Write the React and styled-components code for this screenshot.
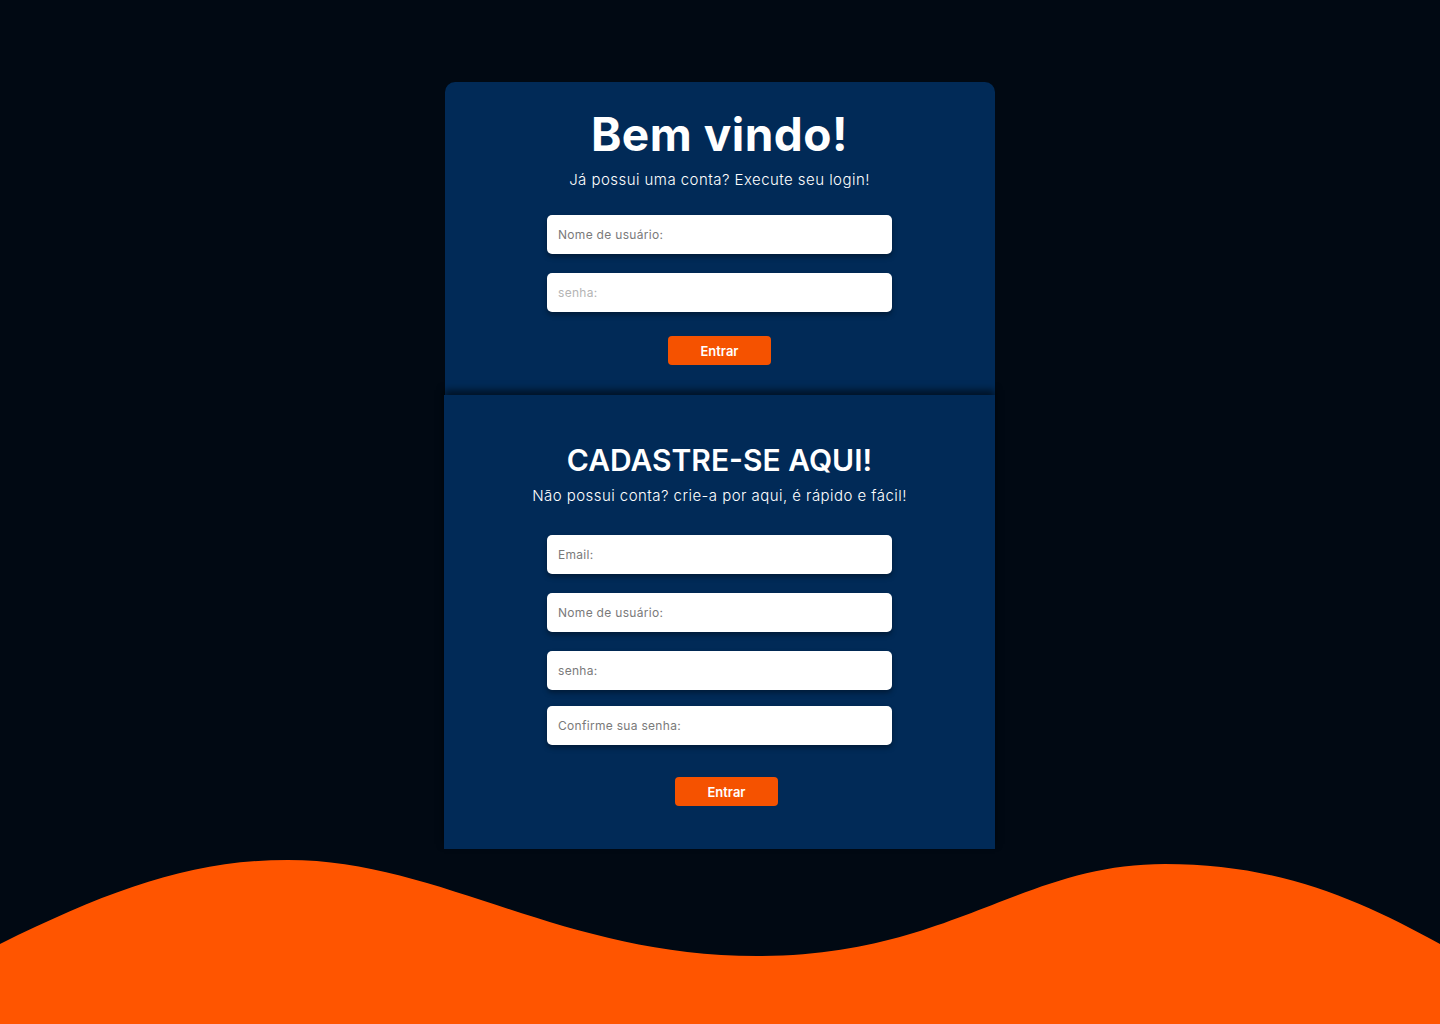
import React from "react";
import styled, { createGlobalStyle } from "styled-components";

const GlobalStyle = createGlobalStyle`
  * { box-sizing: border-box; }
  body {
    margin: 0;
    background: #010913;
    font-family: "Inter", "Noto Sans", sans-serif;
  }
`;

export default function App() {
  return (
    <>
      <GlobalStyle />
      <Page>
        <Stack>
          <LoginCard>
            <Title>Bem vindo!</Title>
            <Subtitle $top="8px">Já possui uma conta? Execute seu login!</Subtitle>
            <Form $top="25px">
              <Field placeholder="Nome de usuário:" />
              <Field placeholder="senha:" type="password" $faint />
            </Form>
            <Button $top="24px">Entrar</Button>
          </LoginCard>
          <RegisterCard>
            <SectionTitle>CADASTRE-SE AQUI!</SectionTitle>
            <Subtitle $top="8px">
              Não possui conta? crie-a por aqui, é rápido e fácil!
            </Subtitle>
            <Form $top="29px">
              <Field placeholder="Email:" />
              <Field placeholder="Nome de usuário:" />
              <Field placeholder="senha:" type="password" />
              <Field placeholder="Confirme sua senha:" type="password" $tight />
            </Form>
            <Button $top="32px" $shift="14px">
              Entrar
            </Button>
          </RegisterCard>
        </Stack>
        <Wave viewBox="0 0 1440 174" preserveAspectRatio="none">
          <path
            d="M0 94 C 110 40 190 10 288 10 C 440 10 560 106 757 106 C 950 106 1020 14 1165 14 C 1280 14 1360 50 1440 94 L 1440 174 L 0 174 Z"
            fill="#ff5500"
          />
        </Wave>
      </Page>
    </>
  );
}

const Page = styled.div`
  min-height: 1024px;
  display: flex;
  flex-direction: column;
  align-items: center;
`;

const Stack = styled.div`
  margin-top: 82px;
  width: 550px;
  display: flex;
  flex-direction: column;
`;

const LoginCard = styled.section`
  background: #012a57;
  border-radius: 10px 10px 0 0;
  padding: 24px 1px 30px 0;
  display: flex;
  flex-direction: column;
  align-items: center;
`;

const RegisterCard = styled.section`
  position: relative;
  background: #012a57;
  margin-left: -1px;
  padding: 47px 0 43px;
  display: flex;
  flex-direction: column;
  align-items: center;
  box-shadow: 0 -5px 7px rgba(0, 0, 0, 0.55);
`;

const Title = styled.h1`
  margin: 0;
  color: #ffffff;
  font-size: 46px;
  font-weight: 700;
  line-height: 56px;
  letter-spacing: 0.5px;
`;

const SectionTitle = styled.h2`
  margin: 0;
  color: #ffffff;
  font-size: 30px;
  font-weight: 600;
  line-height: 36px;
  letter-spacing: 0;
`;

const Subtitle = styled.p`
  margin: ${(p) => p.$top} 0 0;
  color: #ffffff;
  font-size: 15px;
  font-weight: 300;
  line-height: 20px;
  letter-spacing: 0.45px;
`;

const Form = styled.div`
  margin-top: ${(p) => p.$top};
  display: flex;
  flex-direction: column;
  gap: 19px;
`;

const Field = styled.input`
  width: 345px;
  height: 39px;
  margin-top: ${(p) => (p.$tight ? "-3px" : "0")};
  border: none;
  border-radius: 5px;
  background: #ffffff;
  padding: 0 11px;
  font-family: inherit;
  font-size: 12px;
  font-weight: 400;
  letter-spacing: 0.3px;
  color: #333;
  box-shadow: 0 3px 5px rgba(0, 0, 0, 0.35);
  outline: none;

  &::placeholder {
    color: ${(p) => (p.$faint ? "#b4b4b4" : "#7a7a7a")};
  }
`;

const Button = styled.button`
  margin-top: ${(p) => p.$top};
  margin-left: ${(p) => p.$shift || "0"};
  width: 103px;
  height: 29px;
  border: none;
  border-radius: 4px;
  background: #f55200;
  color: #ffffff;
  font-family: inherit;
  font-size: 13px;
  font-weight: 600;
  cursor: pointer;
`;

const Wave = styled.svg`
  display: block;
  width: 100%;
  height: 174px;
  margin-top: auto;
`;
